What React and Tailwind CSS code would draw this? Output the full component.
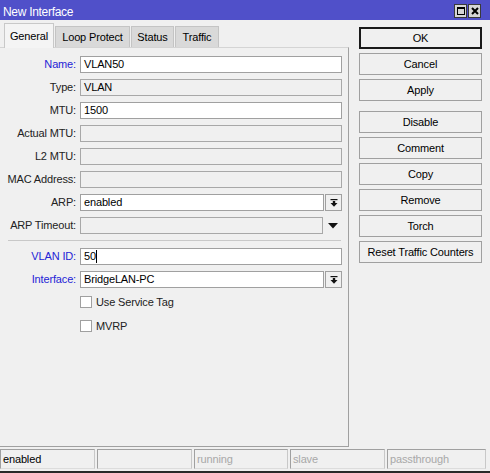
import React from 'react';

const font = { fontFamily: '"Liberation Sans", Arial, sans-serif' };

function DropIcon() {
  return (
    <svg width="8" height="8" viewBox="0 0 8 8">
      <rect x="0.5" y="0" width="7" height="1.2" fill="#111" />
      <rect x="2.8" y="2" width="2.4" height="2" fill="#111" />
      <polygon points="0.5,4 7.5,4 4,7.8" fill="#111" />
    </svg>
  );
}

function Field({ label, value, blue, disabled, drop, tri, cursor }) {
  return (
    <div className="flex items-center h-[17px]">
      <div className={`w-[77px] text-right pr-[1px] ${blue ? 'text-[#2424d6]' : 'text-[#222]'}`}>{label}:</div>
      <div className="ml-[3px] flex items-center">
        <div
          className={`h-[17px] border flex items-center px-[3px] text-black ${
            disabled ? 'bg-[#f0f0f0] border-[#a8a8a8]' : 'bg-white border-[#a0a0a0]'
          } ${drop ? 'w-[244px]' : tri ? 'w-[243px]' : 'w-[262px]'}`}
        >
          {value}
          {cursor && <span className="inline-block w-[1px] h-[13px] bg-black" />}
        </div>
        {drop && (
          <div className="ml-[1px] w-[17px] h-[17px] border border-[#a0a0a0] bg-[#f0f0f0] flex items-center justify-center">
            <DropIcon />
          </div>
        )}
        {tri && (
          <div className="w-[19px] h-[17px] flex items-center justify-center">
            <svg width="10" height="6" viewBox="0 0 10 6">
              <polygon points="0,0 10,0 5,5.5" fill="#111" />
            </svg>
          </div>
        )}
      </div>
    </div>
  );
}

function Check({ label }) {
  return (
    <div className="flex items-center h-[12px] pl-[80px]">
      <div className="w-[12px] h-[12px] bg-white border border-[#a0a0a0]" />
      <span className="ml-[4px] text-[#222]">{label}</span>
    </div>
  );
}

function Btn({ children, primary, className = '' }) {
  return (
    <div
      className={`w-[123px] h-[22px] flex items-center justify-center text-black bg-[#f0f0f0] border ${
        primary ? 'border-[#1a1a1a] ring-1 ring-inset ring-[#1a1a1a]' : 'border-[#a0a0a0]'
      } ${className}`}
    >
      {children}
    </div>
  );
}

export default function App() {
  const tabs = ['Loop Protect', 'Status', 'Traffic'];
  const tabW = ['w-[75px]', 'w-[43px]', 'w-[44px]'];
  const status = [
    { t: 'enabled', on: true, w: 'w-[95px]' },
    { t: '', on: true, w: 'w-[95px]' },
    { t: 'running', w: 'w-[94px]' },
    { t: 'slave', w: 'w-[95px]' },
    { t: 'passthrough', w: 'w-[99px]' },
  ];

  return (
    <div className="w-[490px] h-[473px] bg-[#f0f0f0] flex flex-col text-[11px] tracking-[-0.15px] overflow-hidden" style={font}>
      {/* title bar */}
      <div className="h-[20px] bg-[#5050c9] flex items-center justify-between pl-[3px] pr-[9px] shrink-0">
        <span className="text-white text-[12px] tracking-[-0.3px] pt-[4px]">New Interface</span>
        <div className="flex gap-[1px] pt-[1px]">
          <div className="w-[13px] h-[14px] bg-[#d6d6d6] border border-[#3a3a3a] flex items-center justify-center">
            <div className="w-[8px] h-[8px] border border-black border-t-2" />
          </div>
          <div className="w-[13px] h-[14px] bg-[#d6d6d6] border border-[#3a3a3a] flex items-center justify-center">
            <svg width="8" height="8" viewBox="0 0 8 8">
              <path d="M1 1 L7 7 M7 1 L1 7" stroke="#000" strokeWidth="2" />
            </svg>
          </div>
        </div>
      </div>

      <div className="flex flex-1">
        {/* left: tabs + panel */}
        <div className="w-[349px] flex flex-col pt-[3px]">
          <div className="flex items-end h-[24px] pl-[4px] relative z-10">
            <div className="w-[50px] h-[25px] -mb-[1px] bg-[#f4f4f4] border border-b-0 border-[#c8c8c8] flex items-center justify-center text-black">
              General
            </div>
            {tabs.map((t, i) => (
              <div
                key={t}
                className={`${tabW[i]} h-[21px] ml-[1px] bg-[#d9d9d9] border border-b-0 border-[#c4c4c4] flex items-center justify-center text-black`}
              >
                {t}
              </div>
            ))}
          </div>
          <div className="h-[400px] border-t border-t-[#d4d4d4] border-r border-b border-[#a0a0a0] pt-[8px] flex flex-col">
            <div className="flex flex-col gap-[6px]">
              <Field label="Name" value="VLAN50" blue />
              <Field label="Type" value="VLAN" disabled />
              <Field label="MTU" value="1500" />
              <Field label="Actual MTU" disabled />
              <Field label="L2 MTU" disabled />
              <Field label="MAC Address" disabled />
              <Field label="ARP" value="enabled" drop />
              <Field label="ARP Timeout" disabled tri />
            </div>
            <div className="ml-[8px] w-[333px] h-[1px] bg-[#c8c8c8] mt-[6px] mb-[7px]" />
            <div className="flex flex-col gap-[6px]">
              <Field label="VLAN ID" value="50" blue cursor />
              <Field label="Interface" value="BridgeLAN-PC" blue drop />
            </div>
            <div className="flex flex-col gap-[12px] mt-[8px]">
              <Check label="Use Service Tag" />
              <Check label="MVRP" />
            </div>
          </div>
        </div>

        {/* right: buttons */}
        <div className="ml-[10px] pt-[7px] flex flex-col gap-[4px]">
          <Btn primary>OK</Btn>
          <Btn>Cancel</Btn>
          <Btn>Apply</Btn>
          <Btn className="mt-[6px]">Disable</Btn>
          <Btn>Comment</Btn>
          <Btn>Copy</Btn>
          <Btn>Remove</Btn>
          <Btn>Torch</Btn>
          <Btn>Reset Traffic Counters</Btn>
        </div>
      </div>

      {/* status bar */}
      <div className="flex gap-[2px] mt-[2px] h-[20px] shrink-0">
        {status.map((s, i) => (
          <div
            key={i}
            className={`${s.w} h-[20px] border border-[#a0a0a0] border-r-[#c8c8c8] border-b-[#dcdcdc] flex items-center px-[2px] ${
              s.on ? 'text-black' : 'text-[#a8a8a8]'
            }`}
          >
            {s.t}
          </div>
        ))}
      </div>
      <div className="h-[2px] mt-[2px] bg-[#2a2a2a] shrink-0" />
    </div>
  );
}
